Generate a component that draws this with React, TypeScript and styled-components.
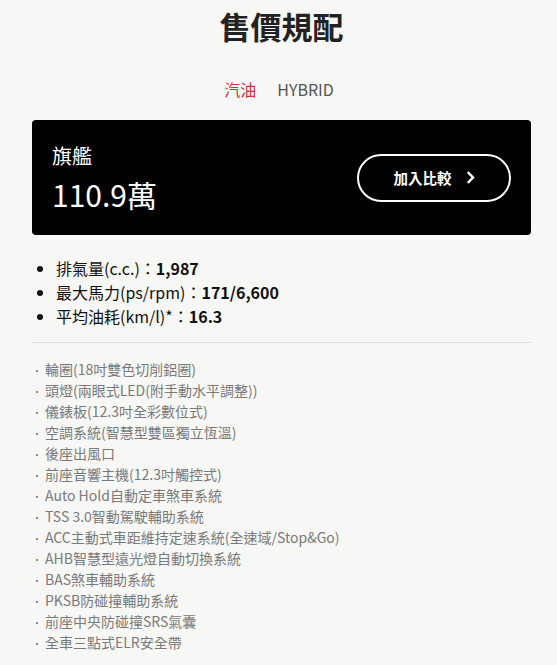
import React from 'react';
import styled, { createGlobalStyle } from 'styled-components';

const GlobalStyle = createGlobalStyle`
  html, body {
    margin: 0;
    padding: 0;
    background: #f7f7f5;
  }
  body {
    font-family: "Noto Sans CJK TC", "Noto Sans", sans-serif;
    color: #222;
  }
`;

const Page = styled.div`
  width: 557px;
  padding: 0 26px 0 32px;
  box-sizing: border-box;
`;

const Title = styled.h1`
  margin: 0;
  padding-top: 4px;
  font-size: 31px;
  line-height: 44px;
  font-weight: 700;
  text-align: center;
  color: #222;
`;

const Tabs = styled.div`
  display: flex;
  justify-content: center;
  gap: 21px;
  margin: 29px 5px 0 0;
`;

const Tab = styled.button<{ $active?: boolean }>`
  border: none;
  background: none;
  padding: 0;
  font-family: inherit;
  font-size: 16px;
  line-height: 24px;
  color: ${(p) => (p.$active ? '#cc3341' : '#555')};
  cursor: pointer;
`;

const Card = styled.div`
  margin-top: 19px;
  height: 115px;
  box-sizing: border-box;
  background: #000;
  border-radius: 4px;
  padding: 0 20px;
  display: flex;
  align-items: center;
  justify-content: space-between;
  color: #fff;
`;

const Grade = styled.div`
  display: flex;
  flex-direction: column;
  padding-top: 2px;
`;

const GradeName = styled.div`
  font-size: 20px;
  line-height: 30px;
`;

const Price = styled.div`
  font-size: 30px;
  line-height: 46px;
`;

const CompareBtn = styled.button`
  width: 154px;
  height: 48px;
  box-sizing: border-box;
  border: 2px solid #fff;
  border-radius: 24px;
  background: transparent;
  color: #fff;
  font-family: inherit;
  font-size: 14.5px;
  font-weight: 700;
  display: flex;
  align-items: center;
  justify-content: center;
  gap: 14px;
  padding: 0;
  cursor: pointer;
`;

const Specs = styled.ul`
  margin: 21px 0 0;
  padding: 0 0 0 24px;
  list-style: disc;
`;

const Spec = styled.li`
  font-size: 16px;
  line-height: 24px;
  color: #111;
  b {
    font-weight: 700;
  }
`;

const Divider = styled.hr`
  margin: 14px 0 0;
  border: none;
  border-top: 1px solid #dedede;
`;

const Features = styled.ul`
  margin: 16px 0 0;
  padding: 0;
  list-style: none;
`;

const Feature = styled.li`
  font-size: 14px;
  line-height: 21px;
  color: #7a7a7a;
  display: flex;
  align-items: center;
  &::before {
    content: '';
    flex: none;
    width: 2px;
    height: 2px;
    margin: 2px 7px 0 4px;
    background: #888;
  }
`;

const specs = [
  { label: '排氣量(c.c.)：', value: '1,987' },
  { label: '最大馬力(ps/rpm)：', value: '171/6,600' },
  { label: '平均油耗(km/l)*：', value: '16.3' },
];

const features = [
  '輪圈(18吋雙色切削鋁圈)',
  '頭燈(兩眼式LED(附手動水平調整))',
  '儀錶板(12.3吋全彩數位式)',
  '空調系統(智慧型雙區獨立恆溫)',
  '後座出風口',
  '前座音響主機(12.3吋觸控式)',
  'Auto Hold自動定車煞車系統',
  'TSS 3.0智動駕駛輔助系統',
  'ACC主動式車距維持定速系統(全速域/Stop&Go)',
  'AHB智慧型遠光燈自動切換系統',
  'BAS煞車輔助系統',
  'PKSB防碰撞輔助系統',
  '前座中央防碰撞SRS氣囊',
  '全車三點式ELR安全帶',
];

const Chevron = () => (
  <svg width="9" height="13" viewBox="0 0 9 13" fill="none">
    <path d="M1.8 1.2 L7 6.5 L1.8 11.8" stroke="#fff" strokeWidth="2.4" />
  </svg>
);

const App: React.FC = () => {
  return (
    <Page>
      <GlobalStyle />
      <Title>售價規配</Title>
      <Tabs>
        <Tab $active>汽油</Tab>
        <Tab>HYBRID</Tab>
      </Tabs>
      <Card>
        <Grade>
          <GradeName>旗艦</GradeName>
          <Price>110.9萬</Price>
        </Grade>
        <CompareBtn>
          加入比較
          <Chevron />
        </CompareBtn>
      </Card>
      <Specs>
        {specs.map((s) => (
          <Spec key={s.label}>
            {s.label}
            <b>{s.value}</b>
          </Spec>
        ))}
      </Specs>
      <Divider />
      <Features>
        {features.map((f) => (
          <Feature key={f}>{f}</Feature>
        ))}
      </Features>
    </Page>
  );
};

export default App;
